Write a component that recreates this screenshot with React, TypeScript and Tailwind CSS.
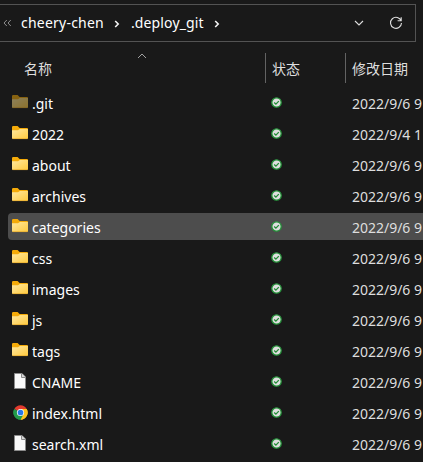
type Kind = "hidden" | "folder" | "file" | "chrome";

const rows: { name: string; kind: Kind; date: string; selected?: boolean }[] = [
  { name: ".git", kind: "hidden", date: "2022/9/6 9" },
  { name: "2022", kind: "folder", date: "2022/9/4 1" },
  { name: "about", kind: "folder", date: "2022/9/6 9" },
  { name: "archives", kind: "folder", date: "2022/9/6 9" },
  { name: "categories", kind: "folder", date: "2022/9/6 9", selected: true },
  { name: "css", kind: "folder", date: "2022/9/6 9" },
  { name: "images", kind: "folder", date: "2022/9/6 9" },
  { name: "js", kind: "folder", date: "2022/9/6 9" },
  { name: "tags", kind: "folder", date: "2022/9/6 9" },
  { name: "CNAME", kind: "file", date: "2022/9/6 9" },
  { name: "index.html", kind: "chrome", date: "2022/9/6 9" },
  { name: "search.xml", kind: "file", date: "2022/9/6 9" },
];

function FolderIcon({ dim }: { dim?: boolean }) {
  return (
    <svg width="16" height="14" viewBox="0 0 16 14" className={dim ? "opacity-50" : ""}>
      <defs>
        <linearGradient id="folderFront" x1="0" y1="0" x2="1" y2="1">
          <stop offset="0" stopColor="#ffe8a0" />
          <stop offset="1" stopColor="#ffca3e" />
        </linearGradient>
      </defs>
      <path d="M0 1.2Q0 0 1.2 0H5.6L7.6 2H15Q16 2 16 3V8H0Z" fill="#f5ab09" />
      <path d="M0 4.2H6L7.8 3H16V12Q16 13 15 13H1Q0 13 0 12Z" fill="url(#folderFront)" />
      <path d="M.5 12.6H15.5" stroke="#e9ae31" strokeWidth=".8" />
    </svg>
  );
}

function FileIcon() {
  return (
    <svg width="16" height="16" viewBox="0 0 16 16">
      <path d="M2.5 .5H10L13.5 4V15.5H2.5Z" fill="#f9f9f9" stroke="#8b8b8b" />
      <path d="M9.5 .5V4.5H13.5" fill="#d8d8d8" stroke="#8b8b8b" />
    </svg>
  );
}

function ChromeIcon() {
  return (
    <svg width="15" height="15" viewBox="1 1 46 46" className="ml-[.5px]">
      <path d="M24 24L4.95 13A22 22 0 0 1 43.05 13Z" fill="#e33b2e" />
      <path d="M24 24L43.05 13A22 22 0 0 1 24 46Z" fill="#fcc31e" />
      <path d="M24 24V46A22 22 0 0 1 4.95 13Z" fill="#229a4b" />
      <path d="M24 13H43.05A22 22 0 0 1 24 46L33.5 29.5Z" fill="#fcc31e" />
      <path d="M14.5 29.5L4.95 13A22 22 0 0 0 24 46L33.5 29.5Z" fill="#229a4b" />
      <circle cx="24" cy="24" r="11" fill="#fff" />
      <circle cx="24" cy="24" r="8.7" fill="#2878e8" />
    </svg>
  );
}

function StatusIcon() {
  return (
    <svg width="11" height="11" viewBox="0 0 11 11">
      <circle cx="5.5" cy="5.5" r="4.7" fill="#dedede" stroke="#239238" strokeWidth="1.3" />
      <path d="M3.2 5.5L4.9 7.1L7.8 4.1" fill="none" stroke="#218b35" strokeWidth="1.3" />
    </svg>
  );
}

function Chevron() {
  return (
    <svg width="6" height="8" viewBox="0 0 6 8" className="mt-px">
      <path d="M1.2 1L4.2 4L1.2 7" fill="none" stroke="#f4f4f4" strokeWidth="1.6" />
    </svg>
  );
}

export default function App() {
  return (
    <div className="h-[462px] w-[423px] overflow-hidden bg-[#191919] pt-1 font-['Noto_Sans','Noto_Sans_CJK_SC',sans-serif] text-[14px] text-white">
      <div className="flex h-[38px] w-[416px] items-center border border-l-0 border-[#535353]">
        <svg width="9" height="8" viewBox="0 0 9 8" className="ml-[3px] shrink-0">
          <path d="M3.8 1L1 4L3.8 7M7.8 1L5 4L7.8 7" fill="none" stroke="#8d8d8d" />
        </svg>
        <span className="ml-[9px] w-[83px] whitespace-nowrap leading-5 tracking-[.22px]">cheery-chen</span>
        <span className="ml-[10px]"><Chevron /></span>
        <span className="ml-[11px] w-[74px] whitespace-nowrap leading-5 tracking-[.12px]">.deploy_git</span>
        <span className="ml-[9px]"><Chevron /></span>
        <svg width="10" height="6" viewBox="0 0 10 6" className="ml-auto mr-[25px]">
          <path d="M1 1L5 5L9 1" fill="none" stroke="#dedede" strokeWidth="1.1" />
        </svg>
        <svg width="14" height="14" viewBox="0 0 14 14" className="mr-3">
          <path d="M12.2 5A5.5 5.5 0 1 0 12.5 7M12.2 1.2V4.8H8.6" fill="none" stroke="#dedede" strokeWidth="1.1" />
        </svg>
      </div>

      <div className="flex h-[47px] pt-[11px] text-[#dedede]">
        <div className="flex h-[30px] w-[265px] shrink-0">
          <span className="ml-6 mt-[6px] w-[113px] leading-5">名称</span>
          <svg width="10" height="6" viewBox="0 0 10 6">
            <path d="M1 5L5 1L9 5" fill="none" stroke="#a2a2a2" />
          </svg>
        </div>
        <div className="h-[30px] w-20 shrink-0 border-l border-[#636363] pl-[6px] pt-[6px] leading-5">状态</div>
        <div className="h-[30px] flex-1 whitespace-nowrap border-l border-[#636363] pl-[6px] pt-[6px] leading-5">修改日期</div>
      </div>

      <div className="flex flex-col gap-1">
        {rows.map((row) => (
          <div
            key={row.name}
            className={`ml-2 flex h-[27px] shrink-0 rounded-l-sm pl-1 ${row.selected ? "bg-[#4d4d4d]" : ""}`}
          >
            <div className={`w-4 shrink-0 ${row.kind === "file" ? "pt-[5px]" : "pt-[6px]"}`}>
              {row.kind === "file" ? <FileIcon /> : row.kind === "chrome" ? <ChromeIcon /> : <FolderIcon dim={row.kind === "hidden"} />}
            </div>
            <span className="ml-1 w-[239px] shrink-0 whitespace-nowrap pt-[5px] leading-5">{row.name}</span>
            <span className="w-[81px] shrink-0 pt-2"><StatusIcon /></span>
            <span className="shrink-0 whitespace-nowrap pt-[5px] leading-5 tracking-[-.02px] text-[#dedede]">{row.date}</span>
          </div>
        ))}
      </div>
    </div>
  );
}
